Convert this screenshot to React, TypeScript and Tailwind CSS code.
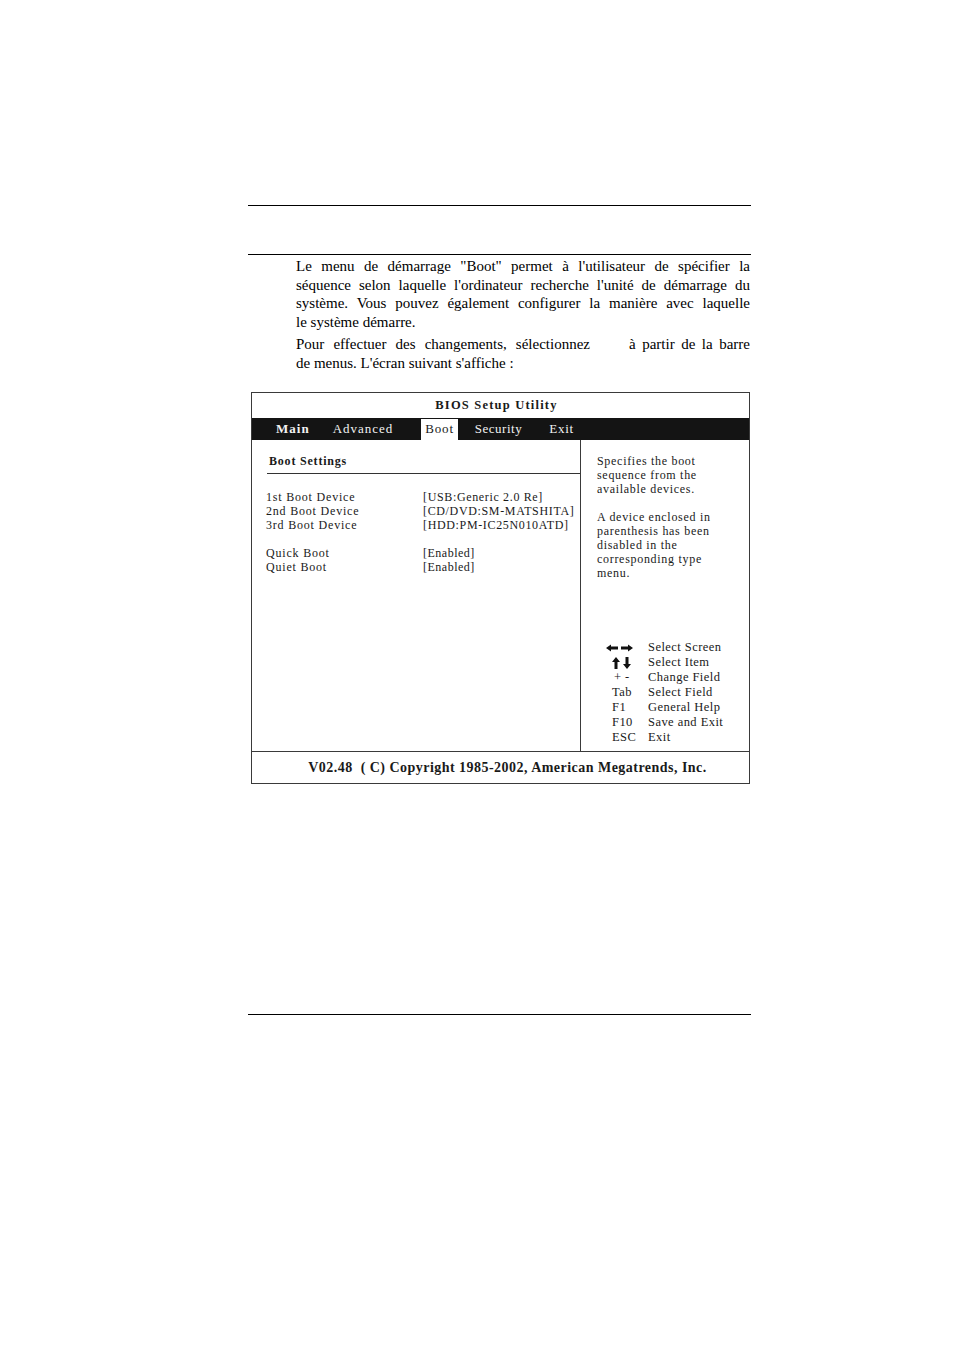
import React from 'react'

function ArrowsLR() {
  return (
    <svg width="27" height="8" viewBox="0 0 27 8" className="block">
      <path d="M0 4 L5 0.5 L5 2.6 L12 2.6 L12 5.4 L5 5.4 L5 7.5 Z" fill="#111" />
      <path d="M27 4 L22 0.5 L22 2.6 L15 2.6 L15 5.4 L22 5.4 L22 7.5 Z" fill="#111" />
    </svg>
  )
}

function ArrowsUD() {
  return (
    <svg width="20" height="12" viewBox="0 0 20 12" className="block">
      <path d="M4 0 L8 5 L5.5 5 L5.5 12 L2.5 12 L2.5 5 L0 5 Z" fill="#111" />
      <path d="M15 12 L19 7 L16.5 7 L16.5 0 L13.5 0 L13.5 7 L11 7 Z" fill="#111" />
    </svg>
  )
}

const items = [
  ['1st Boot Device', '[USB:Generic 2.0 Re]'],
  ['2nd Boot Device', '[CD/DVD:SM-MATSHITA]'],
  ['3rd Boot Device', '[HDD:PM-IC25N010ATD]'],
]

const keys: [React.ReactNode, string][] = [
  [<ArrowsLR />, 'Select Screen'],
  [<div className="pl-[6px]"><ArrowsUD /></div>, 'Select Item'],
  [<span className="pl-[8px]">+ -</span>, 'Change Field'],
  [<span className="pl-[6px]">Tab</span>, 'Select Field'],
  [<span className="pl-[6px]">F1</span>, 'General Help'],
  [<span className="pl-[6px]">F10</span>, 'Save and Exit'],
  [<span className="pl-[6px]">ESC</span>, 'Exit'],
]

const para1 = [
  'Le menu de démarrage "Boot" permet à l\'utilisateur de spécifier la',
  'séquence selon laquelle l\'ordinateur recherche l\'unité de démarrage du',
  'système. Vous pouvez également configurer la manière avec laquelle',
]

export default function App() {
  return (
    <div className="w-[954px] h-[1351px] bg-white text-black font-['Liberation_Serif','Times_New_Roman',serif]">
      <div className="ml-[248px] w-[503px] pt-[205px]">
        <div className="h-px bg-black" />
        <div className="h-[48px]" />
        <div className="h-px bg-black" />

        <div className="pl-[48px] pr-[1px] pt-[2px] text-[15px] leading-[18.5px]">
          <div>
            {para1.map((l) => (
              <div key={l} className="text-justify [text-align-last:justify]">{l}</div>
            ))}
            <div>le système démarre.</div>
          </div>
          <div className="mt-[4px]">
            <div className="flex justify-between">
              <span className="w-[294px] text-justify [text-align-last:justify]">Pour effectuer des changements, sélectionnez</span>
              <span className="w-[121px] text-justify [text-align-last:justify]">à partir de la barre</span>
            </div>
            <div>de menus. L'écran suivant s'affiche :</div>
          </div>
        </div>

        <div className="ml-[3px] mt-[20px] w-[499px] border border-[#3a3a3a] text-[#1a1a1a]">
          <div className="h-[25px] flex items-center justify-center pr-[8px] text-[12.5px] font-bold tracking-[1.2px]">
            BIOS Setup Utility
          </div>
          <div className="h-[22px] bg-[#141414] flex items-center text-[13px] tracking-[0.8px] text-[#f2f2f2]">
            <span className="ml-[24px] font-bold tracking-[1px]">Main</span>
            <span className="ml-[23px] tracking-[1px]">Advanced</span>
            <span className="ml-[28px] h-[21px] px-[4px] flex items-center bg-white text-[#1a1a1a]">Boot</span>
            <span className="ml-[17px] tracking-[0.5px]">Security</span>
            <span className="ml-[27px] tracking-[0.8px]">Exit</span>
          </div>

          <div className="flex h-[312px] border-b border-[#3a3a3a]">
            <div className="w-[329px] border-r border-[#3a3a3a] pt-[14px] text-[12px] leading-[14px] tracking-[0.8px]">
              <div className="pl-[17px] font-bold">Boot Settings</div>
              <div className="ml-[15px] mt-[5px] h-px bg-[#333]" />
              <div className="mt-[16px] pl-[14px]">
                {items.map(([k, v]) => (
                  <div key={k} className="flex">
                    <span className="w-[157px]">{k}</span>
                    <span className="tracking-[0.65px]">{v}</span>
                  </div>
                ))}
                <div className="mt-[14px] flex">
                  <span className="w-[157px]">Quick Boot</span>
                  <span className="tracking-[0.5px]">[Enabled]</span>
                </div>
                <div className="flex">
                  <span className="w-[157px]">Quiet Boot</span>
                  <span className="tracking-[0.5px]">[Enabled]</span>
                </div>
              </div>
            </div>

            <div className="flex-1 flex flex-col pt-[14px] pl-[16px] text-[12px] leading-[14px] tracking-[0.7px]">
              <p>Specifies the boot<br />sequence from the<br />available devices.</p>
              <p className="mt-[14px]">
                A device enclosed in<br />parenthesis has been<br />disabled in the<br />corresponding type<br />menu.
              </p>
              <div className="mt-auto pb-[6px] pl-[9px] text-[12.5px] leading-[15px] tracking-[0.45px]">
                {keys.map(([k, d], i) => (
                  <div key={i} className="flex items-center h-[15px]">
                    <div className="w-[42px] flex items-center">{k}</div>
                    <span>{d}</span>
                  </div>
                ))}
              </div>
            </div>
          </div>

          <div className="h-[31px] flex items-center justify-center pl-[14px] text-[14px] font-bold tracking-[0.47px]">
            V02.48&nbsp;&nbsp;( C) Copyright 1985-2002, American Megatrends, Inc.
          </div>
        </div>

        <div className="mt-[230px] h-px bg-black" />
      </div>
    </div>
  )
}
